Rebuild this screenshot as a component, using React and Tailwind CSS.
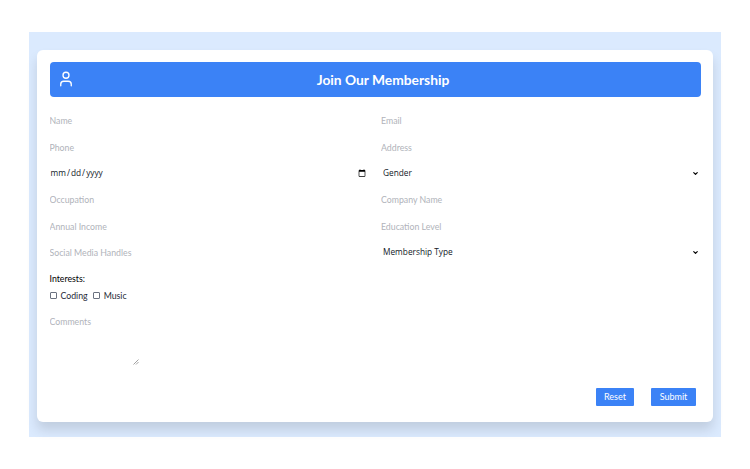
import { User, ChevronDown } from 'lucide-react';

const inputClass = "w-full h-[26.4px] bg-transparent outline-none text-[8.75px] text-black placeholder:text-[#b0b3ba] font-['Lato',sans-serif]";
const selectClass = "block w-full h-[26.4px] pl-[2px] appearance-none bg-transparent outline-none text-[8.3px] text-[#111827] font-['Open_Sans',sans-serif]";
const checkClass = "appearance-none w-[7px] h-[7px] border border-[#6b7280] rounded-[1px] mr-[4px]";

function SelectField({ label }) {
  return (
    <div className="relative">
      <select className={selectClass}>
        <option>{label}</option>
      </select>
      <ChevronDown className="absolute right-[1.5px] top-[9.5px] w-[7px] h-[7px] text-black" strokeWidth={4} />
    </div>
  );
}

export default function App() {
  return (
    <div className="w-[750px] h-[469px] bg-white pt-8 px-[29px] font-['Lato',sans-serif]">
      <div className="h-[405px] bg-[#dbeafe] pt-[18px] px-2">
        <div className="h-[372px] bg-white rounded-md shadow-[0_8px_12px_rgba(0,0,0,0.12)] pt-3 px-[12.5px]">
          {/* Header */}
          <div className="relative h-[35px] bg-[#3b82f6] rounded-[4px] flex items-center justify-center pl-4 pt-[1px]">
            <User className="absolute left-[7.5px] top-[8px] w-[18px] h-[18px] text-white" strokeWidth={1.8} />
            <h1 className="text-[13.8px] font-bold text-white">Join Our Membership</h1>
          </div>

          {/* Fields */}
          <form className="mt-[10.5px]">
            <div className="grid grid-cols-[318.5px_319px] gap-x-[13px]">
              <input className={inputClass} placeholder="Name" />
              <input className={inputClass} placeholder="Email" />
              <input className={inputClass} placeholder="Phone" />
              <input className={inputClass} placeholder="Address" />
              <input type="date" className="w-full h-[26.4px] bg-transparent outline-none text-[8.3px] text-[#111827] font-['Open_Sans',sans-serif]" />
              <SelectField label="Gender" />
              <input className={inputClass} placeholder="Occupation" />
              <input className={inputClass} placeholder="Company Name" />
              <input className={inputClass} placeholder="Annual Income" />
              <input className={inputClass} placeholder="Education Level" />
              <input className={inputClass} placeholder="Social Media Handles" />
              <SelectField label="Membership Type" />
            </div>

            <div className="mt-[6.5px] text-[8.75px] leading-[13px] text-black">Interests:</div>
            <div className="mt-[4px] flex items-center h-[13px] text-[8.75px] text-[#1f2937]">
              <input type="checkbox" className={checkClass} />
              <span className="mr-[5px]">Coding</span>
              <input type="checkbox" className={checkClass} />
              <span>Music</span>
            </div>

            <div className="relative w-[90px] mt-[9px]">
              <textarea
                className="block w-full h-[55px] resize-none bg-transparent outline-none text-[8.75px] leading-[13px] pt-[4px] placeholder:text-[#b0b3ba]"
                placeholder="Comments"
              />
              <svg className="absolute right-[1px] bottom-[1px] w-[6px] h-[6px]" viewBox="0 0 6 6" fill="none" stroke="#8a8a8a" strokeWidth="0.8">
                <path d="M0.5 5.5 L5.5 0.5 M3 5.5 L5.5 3" />
              </svg>
            </div>

            {/* Actions */}
            <div className="flex justify-end gap-[17px] pr-[4.5px] mt-[21.5px]">
              <button type="button" className="w-[38px] h-[18px] bg-[#3b82f6] text-white text-[9px] rounded-[1px]">Reset</button>
              <button type="button" className="w-[45px] h-[18px] bg-[#3b82f6] text-white text-[9px] rounded-[1px]">Submit</button>
            </div>
          </form>
        </div>
      </div>
    </div>
  );
}
